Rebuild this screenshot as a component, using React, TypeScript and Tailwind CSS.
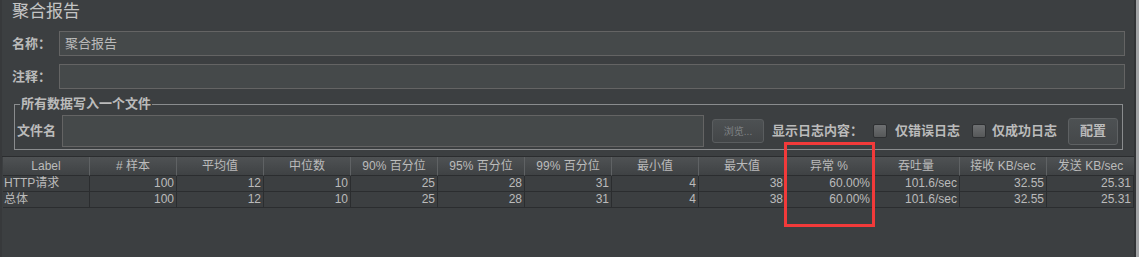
import React from 'react';

const FONT = { fontFamily: '"Liberation Sans", "Noto Sans CJK SC", sans-serif' };

const COLUMNS = [
  'Label',
  '# 样本',
  '平均值',
  '中位数',
  '90% 百分位',
  '95% 百分位',
  '99% 百分位',
  '最小值',
  '最大值',
  '异常 %',
  '吞吐量',
  '接收 KB/sec',
  '发送 KB/sec',
];

const ROWS = [
  ['HTTP请求', '100', '12', '10', '25', '28', '31', '4', '38', '60.00%', '101.6/sec', '32.55', '25.31'],
  ['总体', '100', '12', '10', '25', '28', '31', '4', '38', '60.00%', '101.6/sec', '32.55', '25.31'],
];

const Checkbox = ({ className = '' }: { className?: string }) => (
  <span
    className={`block w-[14px] h-[14px] rounded-[2px] border border-[#2e3032] bg-gradient-to-b from-[#6e7072] to-[#565859] shrink-0 ${className}`}
  />
);

export default function App() {
  return (
    <div
      className="relative w-[1139px] h-[257px] bg-[#3c3f41] text-[#bbbbbb] flex overflow-hidden"
      style={FONT}
    >
      {/* left edge */}
      <div className="w-[2px] bg-[#37393b] shrink-0" />

      <div className="flex-1 flex flex-col min-w-0">
        {/* Title */}
        <div className="pl-[10px] h-[24px] text-[17px] leading-[24px] text-[#c4c4c4]">聚合报告</div>

        {/* Name */}
        <div className="flex items-center mt-[7px] pl-[10px] pr-[9px]">
          <span className="w-[47px] text-[13px] font-bold">名称：</span>
          <div className="flex-1 h-[25px] bg-[#45494a] border border-[#646464] flex items-center pl-[5px] text-[13px]">
            聚合报告
          </div>
        </div>

        {/* Comment */}
        <div className="flex items-center mt-[8px] pl-[10px] pr-[9px]">
          <span className="w-[47px] text-[13px] font-bold">注释：</span>
          <div className="flex-1 h-[25px] bg-[#45494a] border border-[#646464]" />
        </div>

        {/* Write to file group */}
        <fieldset className="mt-[7px] ml-[12px] mr-[11px] border border-[#8a8c8e] pt-[3px] pb-[2px] pl-[2px] pr-0 min-w-0">
          <legend className="ml-[3px] px-[1px] text-[13px] leading-[16px] font-bold whitespace-nowrap">
            所有数据写入一个文件
          </legend>
          <div className="flex items-center whitespace-nowrap">
            <span className="w-[45px] shrink-0 text-[13px] font-bold">文件名</span>
            <div className="w-[642px] shrink-0 h-[32px] bg-[#45494a] border border-[#646464]" />
            <button className="ml-[8px] shrink-0 w-[52px] h-[24px] rounded-[3px] border border-[#5a5d5f] bg-gradient-to-b from-[#4d5153] to-[#434648] text-[10px] text-[#7f8284]">
              浏览...
            </button>
            <span className="ml-[8px] shrink-0 text-[13px] font-bold">显示日志内容：</span>
            <Checkbox className="ml-[10px]" />
            <span className="ml-[8px] shrink-0 text-[13px] font-bold">仅错误日志</span>
            <Checkbox className="ml-[12px]" />
            <span className="ml-[6px] shrink-0 text-[13px] font-bold">仅成功日志</span>
            <button className="ml-[11px] shrink-0 w-[50px] h-[27px] rounded-[3px] border border-[#5e6163] bg-gradient-to-b from-[#4d5153] to-[#45484a] text-[13px] font-bold text-[#bbbbbb]">
              配置
            </button>
          </div>
        </fieldset>

        {/* Table */}
        <div className="mt-[6px] flex-1 border-t border-[#2b2d2f] pl-[1px]">
          <div className="grid grid-cols-[repeat(13,87px)] text-[12px]">
            {COLUMNS.map((c, i) => (
              <div
                key={c}
                className={`h-[19px] flex items-center justify-center whitespace-nowrap bg-gradient-to-b from-[#4f5254] to-[#3f4244] border-b border-[#2b2d2f] ${
                  i < COLUMNS.length - 1 ? 'border-r border-r-[#5f6264]' : ''
                }`}
              >
                {c}
              </div>
            ))}
            {ROWS.map((row, r) =>
              row.map((v, i) => (
                <div
                  key={`${r}-${i}`}
                  className={`h-[16px] leading-[15px] whitespace-nowrap border-b border-r border-[#2b2d2f] ${
                    i === 0 ? 'text-left pl-[1px]' : 'text-right pr-[2px]'
                  }`}
                >
                  {v}
                </div>
              ))
            )}
          </div>
        </div>
      </div>

      {/* right edge */}
      <div className="w-[2px] bg-[#323436] shrink-0" />
      <div className="w-[3px] bg-[#a3a5a7] shrink-0" />

      {/* red annotation */}
      <div className="absolute left-[784px] top-[142px] w-[91px] h-[85px] border-[3px] border-[#f23a3a]" />
    </div>
  );
}
